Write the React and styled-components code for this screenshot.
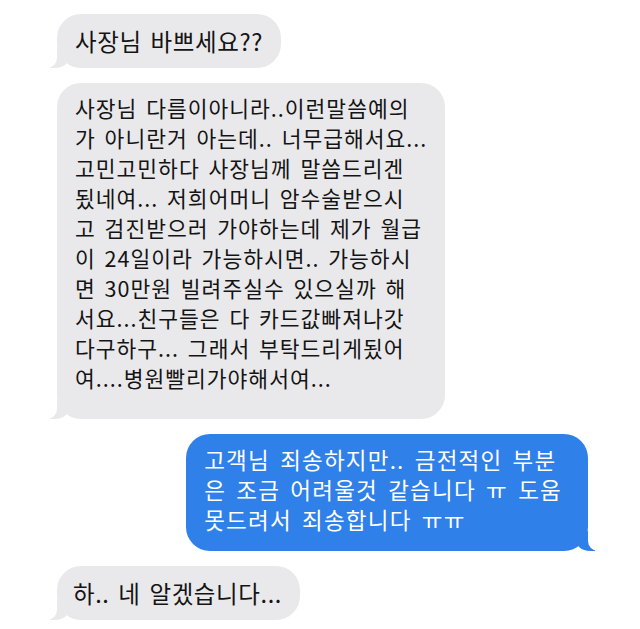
import React from 'react';
import styled, { createGlobalStyle, css } from 'styled-components';

const GlobalStyle = createGlobalStyle`
  html, body {
    margin: 0;
    padding: 0;
    background: #ffffff;
  }
  body {
    font-family: "Noto Sans CJK KR", "Noto Sans", sans-serif;
  }
`;

const Thread = styled.div`
  width: 640px;
  height: 629px;
  box-sizing: border-box;
  padding: 14px 52px 0 57px;
  display: flex;
  flex-direction: column;
  gap: 15px;
  overflow: hidden;
`;

const Bubble = styled.div`
  position: relative;
  align-self: ${({ $mine }) => ($mine ? 'flex-end' : 'flex-start')};
  box-sizing: border-box;
  border-radius: 24px;
  white-space: pre-line;
  font-size: ${({ $size }) => $size || 21.5}px;
  line-height: 30px;
  letter-spacing: ${({ $ls }) => $ls ?? 1}px;
  word-spacing: ${({ $ws }) => $ws ?? 3}px;
  padding: ${({ $pad }) => $pad || '12px 18px'};
  color: ${({ $mine }) => ($mine ? '#ffffff' : '#141414')};
  background: ${({ $mine }) => ($mine ? '#3080ea' : '#e9e9eb')};

  &::before,
  &::after {
    content: '';
    position: absolute;
    bottom: 0;
    height: 20px;
  }

  ${({ $mine }) =>
    $mine
      ? css`
          &::before {
            right: -7px;
            width: 20px;
            background: #3080ea;
            border-bottom-left-radius: 15px 13px;
          }
          &::after {
            right: -24px;
            width: 24px;
            background: #ffffff;
            border-bottom-left-radius: 10px;
          }
        `
      : css`
          &::before {
            left: -7px;
            width: 20px;
            background: #e9e9eb;
            border-bottom-right-radius: 15px 13px;
          }
          &::after {
            left: -24px;
            width: 24px;
            background: #ffffff;
            border-bottom-right-radius: 10px;
          }
        `}
`;

const messages = [
  { id: 1, size: 23.5, ls: 0.6, pad: '12px 18px 12px 18px', text: '사장님 바쁘세요??' },
  {
    id: 2,
    pad: '10px 18px 26px 18px',
    text:
      '사장님 다름이아니라..이런말씀예의\n가 아니란거 아는데.. 너무급해서요...\n고민고민하다 사장님께 말씀드리겐\n됬네여... 저희어머니 암수술받으시\n고 검진받으러 가야하는데 제가 월급\n이 24일이라 가능하시면.. 가능하시\n면 30만원 빌려주실수 있으실까 해\n서요...친구들은 다 카드값빠져나갓\n다구하구... 그래서 부탁드리게됬어\n여....병원빨리가야해서여...',
  },
  {
    id: 3,
    mine: true,
    size: 22.5,
    ls: 1.2,
    ws: 4,
    pad: '10px 26px 17px 18px',
    text: '고객님 죄송하지만.. 금전적인 부분\n은 조금 어려울것 같습니다 ㅠ 도움\n못드려서 죄송합니다 ㅠㅠ',
  },
  { id: 4, size: 23.5, ls: 0.6, pad: '12px 18px 12px 16px', text: '하.. 네 알겠습니다...' },
];

export default function App() {
  return (
    <>
      <GlobalStyle />
      <Thread>
        {messages.map((m) => (
          <Bubble
            key={m.id}
            $mine={m.mine}
            $size={m.size}
            $ls={m.ls}
            $ws={m.ws}
            $pad={m.pad}
          >
            {m.text}
          </Bubble>
        ))}
      </Thread>
    </>
  );
}
